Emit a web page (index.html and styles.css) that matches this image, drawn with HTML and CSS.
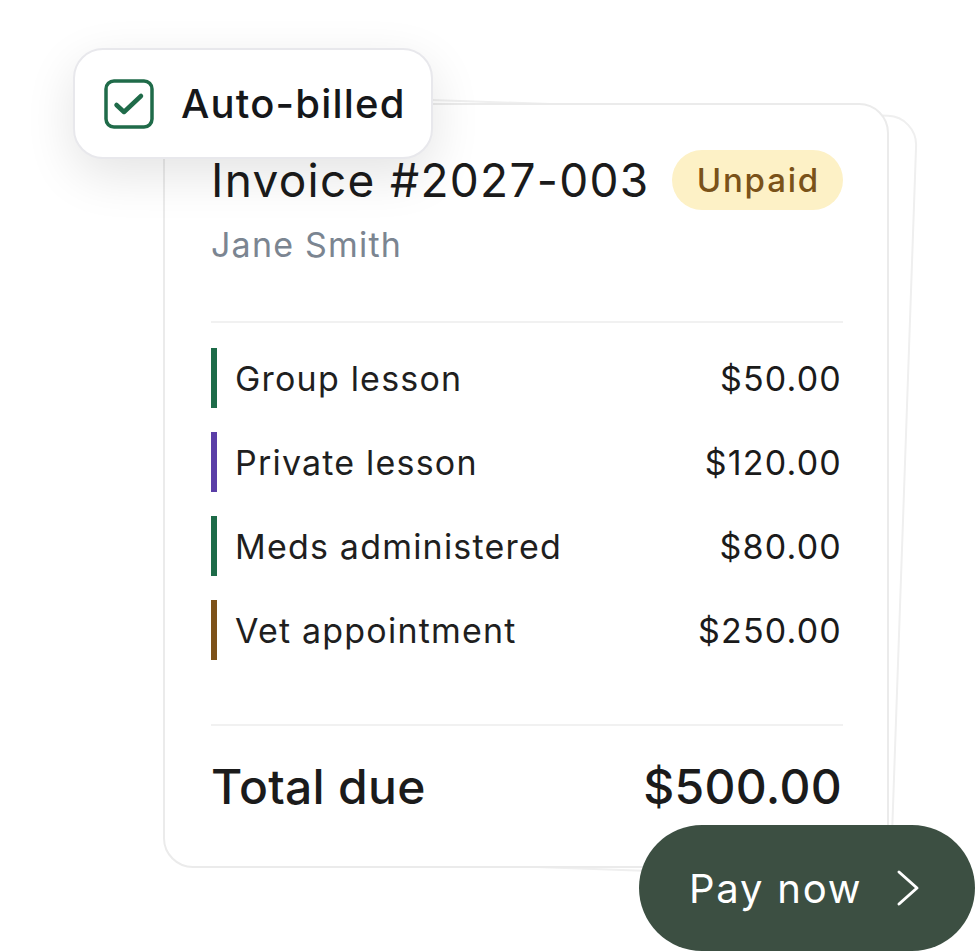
FILE: index.html
```html
<!DOCTYPE html>
<html lang="en">
<head>
<meta charset="utf-8">
<title>Invoice</title>
<link rel="stylesheet" href="styles.css">
</head>
<body>
<div class="stage">
  <div class="card-back"></div>
  <section class="card">
    <div class="card-head">
      <h1 class="title">Invoice #2027-003</h1>
      <span class="status">Unpaid</span>
    </div>
    <p class="customer">Jane Smith</p>
    <hr class="rule">
    <ul class="items">
      <li class="item item--green"><span class="item-bar"></span><span class="item-name">Group lesson</span><span class="item-amt">$50.00</span></li>
      <li class="item item--purple"><span class="item-bar"></span><span class="item-name">Private lesson</span><span class="item-amt">$120.00</span></li>
      <li class="item item--green"><span class="item-bar"></span><span class="item-name">Meds administered</span><span class="item-amt">$80.00</span></li>
      <li class="item item--brown"><span class="item-bar"></span><span class="item-name">Vet appointment</span><span class="item-amt">$250.00</span></li>
    </ul>
    <hr class="rule rule--total">
    <div class="total">
      <span class="total-label">Total due</span>
      <span class="total-amt">$500.00</span>
    </div>
  </section>

  <div class="auto-badge">
    <svg class="check" width="50" height="50" viewBox="0 0 50 50" fill="none">
      <rect x="2" y="2" width="46" height="46" rx="8" stroke="#1f6b49" stroke-width="3.5"/>
      <path d="M12.5 26 L20 33 L37 17" stroke="#1f6b49" stroke-width="4.5" stroke-linecap="round" stroke-linejoin="round"/>
    </svg>
    <span class="auto-text">Auto-billed</span>
  </div>

  <button class="pay" type="button">
    <span class="pay-text">Pay now</span>
    <svg class="pay-chev" width="28" height="38" viewBox="0 0 28 38" fill="none">
      <path d="M5 3 L23 19 L5 35" stroke="#ffffff" stroke-width="3" stroke-linecap="round" stroke-linejoin="round"/>
    </svg>
  </button>
</div>
</body>
</html>
```

FILE: styles.css
```css
* { box-sizing: border-box; }

html, body {
  margin: 0;
  padding: 0;
  background: #ffffff;
}

body {
  font-family: "Inter", "Noto Sans", "Liberation Sans", sans-serif;
  color: #1b1b1b;
}

.stage {
  position: relative;
  width: 975px;
  height: 951px;
  overflow: hidden;
  padding: 103px 0 0 163px;
}

.card-back {
  position: absolute;
  left: 163px;
  top: 103px;
  width: 726px;
  height: 765px;
  border: 2px solid #efefef;
  border-radius: 30px;
  background: #ffffff;
  transform: translate(16px, 0) rotate(2deg);
}

.card {
  position: relative;
  width: 726px;
  height: 765px;
  border: 2px solid #ebebeb;
  border-radius: 30px;
  background: #ffffff;
  padding: 45px 44px 0 46px;
  display: flex;
  flex-direction: column;
}

.card-head {
  display: flex;
  align-items: center;
  justify-content: space-between;
  height: 60px;
}

.title {
  margin: 0;
  font-size: 46px;
  font-weight: 400;
  line-height: 60px;
  letter-spacing: 1.3px;
  color: #1b1b1b;
}

.status {
  display: inline-flex;
  align-items: center;
  height: 60px;
  padding: 0 23px 0 25px;
  border-radius: 30px;
  background: #fdf1c6;
  color: #7a5219;
  font-size: 33px;
  font-weight: 500;
  letter-spacing: 1.8px;
}

.customer {
  margin: 15px 0 0;
  font-size: 34px;
  line-height: 40px;
  letter-spacing: 1.2px;
  color: #7b8591;
}

.rule {
  margin: 56px 0 0;
  border: 0;
  height: 2px;
  background: #f1f1f1;
}

.items {
  list-style: none;
  margin: 25px 0 0;
  padding: 0;
  display: flex;
  flex-direction: column;
  gap: 24px;
}

.item {
  display: flex;
  align-items: center;
  height: 60px;
}

.item-bar {
  width: 6px;
  height: 60px;
  margin-right: 18px;
  flex: none;
}

.item--green .item-bar { background: #1d6b48; }
.item--purple .item-bar { background: #5a3ea7; }
.item--brown .item-bar { background: #7d5118; }

.item-name {
  flex: 1;
  font-size: 34px;
  letter-spacing: 1.2px;
  color: #1f1f1f;
}

.item-amt {
  font-size: 34px;
  letter-spacing: 1.2px;
  color: #1b1b1b;
  padding-right: 2px;
  margin-right: -1px;
}

.rule--total {
  margin-top: 64px;
}

.total {
  display: flex;
  align-items: center;
  justify-content: space-between;
  height: 60px;
  margin-top: 30px;
}

.total-label,
.total-amt {
  font-size: 48px;
  font-weight: 500;
  letter-spacing: 0.3px;
  color: #1b1b1b;
}

.total-amt { padding-right: 1px; }

.auto-badge {
  position: absolute;
  left: 73px;
  top: 48px;
  height: 111px;
  display: flex;
  align-items: center;
  gap: 27px;
  padding: 0 25px 0 29px;
  border: 2px solid #e8e8ec;
  border-radius: 30px;
  background: #ffffff;
  box-shadow: 0 16px 50px rgba(0, 0, 0, 0.11);
}

.check {
  display: block;
  flex: none;
}

.auto-text {
  font-size: 40px;
  font-weight: 500;
  letter-spacing: 1.2px;
  color: #15171a;
}

.pay {
  position: absolute;
  left: 639px;
  top: 825px;
  width: 336px;
  height: 126px;
  border: 0;
  border-radius: 63px;
  background: #3c4f42;
  color: #ffffff;
  display: flex;
  align-items: center;
  padding: 0 0 0 50px;
  font-family: "Inter", "Noto Sans", "Liberation Sans", sans-serif;
  cursor: pointer;
}

.pay-text {
  font-size: 40px;
  font-weight: 400;
  letter-spacing: 1.8px;
}

.pay-chev {
  display: block;
  margin-left: 32px;
}
```
